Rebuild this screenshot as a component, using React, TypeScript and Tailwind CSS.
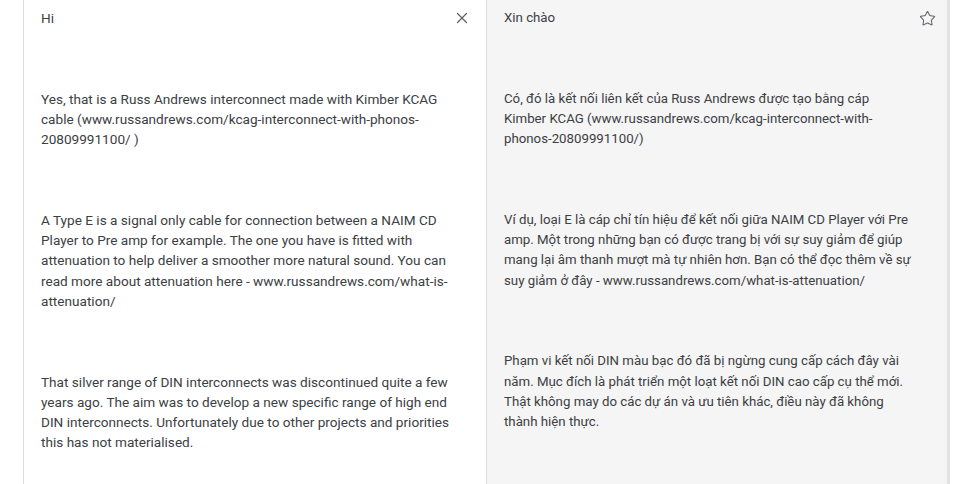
import { X, Star } from 'lucide-react';

const source: string[][] = [
  ['Hi'],
  [
    'Yes, that is a Russ Andrews interconnect made with Kimber KCAG',
    'cable (www.russandrews.com/kcag-interconnect-with-phonos-',
    '20809991100/ )',
  ],
  [
    'A Type E is a signal only cable for connection between a NAIM CD',
    'Player to Pre amp for example. The one you have is fitted with',
    'attenuation to help deliver a smoother more natural sound. You can',
    'read more about attenuation here - www.russandrews.com/what-is-',
    'attenuation/',
  ],
  [
    'That silver range of DIN interconnects was discontinued quite a few',
    'years ago. The aim was to develop a new specific range of high end',
    'DIN interconnects. Unfortunately due to other projects and priorities',
    'this has not materialised.',
  ],
];

const translated: string[][] = [
  ['Xin chào'],
  [
    'Có, đó là kết nối liên kết của Russ Andrews được tạo bằng cáp',
    'Kimber KCAG (www.russandrews.com/kcag-interconnect-with-',
    'phonos-20809991100/)',
  ],
  [
    'Ví dụ, loại E là cáp chỉ tín hiệu để kết nối giữa NAIM CD Player với Pre',
    'amp. Một trong những bạn có được trang bị với sự suy giảm để giúp',
    'mang lại âm thanh mượt mà tự nhiên hơn. Bạn có thể đọc thêm về sự',
    'suy giảm ở đây - www.russandrews.com/what-is-attenuation/',
  ],
  [
    'Phạm vi kết nối DIN màu bạc đó đã bị ngừng cung cấp cách đây vài',
    'năm. Mục đích là phát triển một loạt kết nối DIN cao cấp cụ thể mới.',
    'Thật không may do các dự án và ưu tiên khác, điều này đã không',
    'thành hiện thực.',
  ],
];

function TextBlock({ paragraphs }: { paragraphs: string[][] }) {
  return (
    <div className="flex flex-col gap-[60.6px]">
      {paragraphs.map((lines, i) => (
        <p key={i}>
          {lines.map((line, j) => (
            <span key={j} className="block whitespace-nowrap">
              {line}
            </span>
          ))}
        </p>
      ))}
    </div>
  );
}

export default function App() {
  return (
    <main
      className="flex h-[484px] w-[960px] overflow-hidden bg-white leading-[20.2px] text-[#3c4043]"
      style={{ fontFamily: 'Roboto, "Noto Sans", Arial, sans-serif' }}
    >
      <div className="w-[23px] shrink-0" />

      {/* source pane */}
      <section className="relative w-[464px] shrink-0 border-x border-[#dadce0] bg-white pl-[17px] pt-[8px] text-[13.6px]">
        <TextBlock paragraphs={source} />
        <button className="absolute right-[15px] top-[9px] text-[#5f6368]">
          <X size={18} strokeWidth={1.6} />
        </button>
      </section>

      {/* translation pane */}
      <section className="relative w-[463px] shrink-0 border-r-[3px] border-[#e3e3e3] bg-[#f5f5f5] pl-[17px] pt-[8px] text-[13.25px]">
        <TextBlock paragraphs={translated} />
        <button className="absolute right-[11px] top-[10px] text-[#5f6368]">
          <Star size={17} strokeWidth={1.5} />
        </button>
      </section>
    </main>
  );
}
